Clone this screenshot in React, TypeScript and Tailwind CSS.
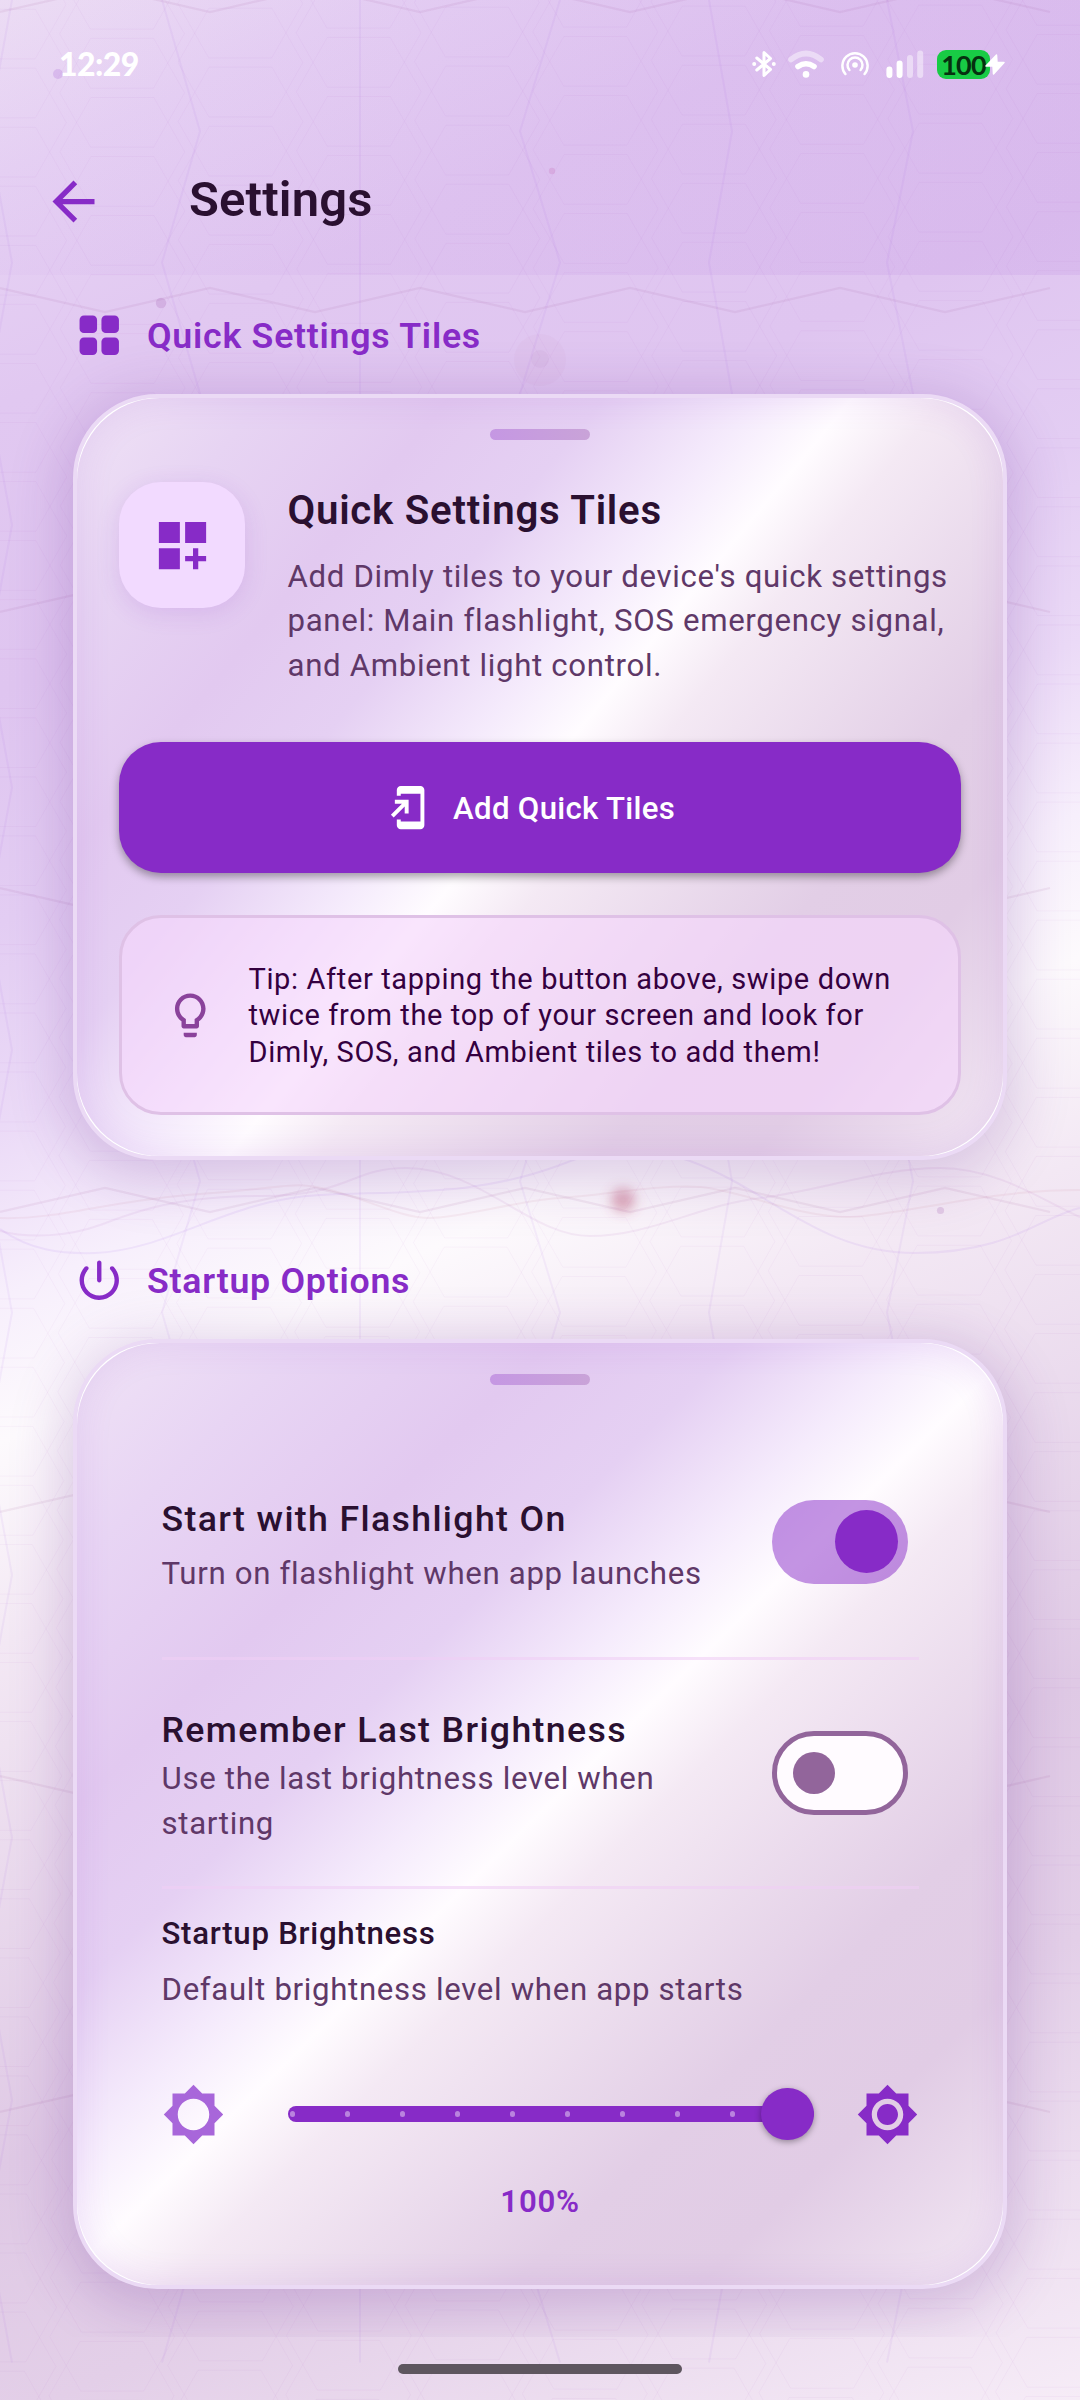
import React from 'react';

const PRIMARY = '#872BC7';

/* ---------- ambient background ---------- */

function hexPath(): string {
  const R = 62.4;
  const H = 54.4;
  const parts: string[] = [];
  for (let c = -2; c < 10; c++) {
    for (let j = -2; j < 42; j++) {
      const y = 92.8 + 59.05 * j + (c % 2 === 0 ? 0 : 29.3) - (c * 118.3) / 240;
      const shift = 1.7 - Math.pow((y - 500) / 1700, 2) * 9;
      const x = 121 + 118.3 * c + shift;
      parts.push(
        `M${x - R} ${y}L${x - 31.5} ${y - H}H${x + 31.5}L${x + R} ${y}L${x + 31.5} ${y + H}H${x - 31.5}Z`,
      );
    }
  }
  return parts.join('');
}

const COLUMNS: [number, number][] = [
  [12, -12],
  [162, 200],
  [360, 360],
  [560, 520],
  [709, 732],
  [887, 913],
];

const ROWS: [number, number][] = [
  [0, 1],
  [300, -1],
  [600, 1],
  [900, -1],
  [1200, 1],
  [1500, 1],
  [1788, -1],
  [2100, 1],
];

function columnPoints([a, b]: [number, number]): string {
  return Array.from({ length: 19 }, (_, i) => `${i % 2 === 0 ? a : b},${i * 131.25}`).join(' ');
}

function rowPoints([y, s]: [number, number]): string {
  return Array.from({ length: 11 }, (_, i) => `${i * 105},${y + (i % 2 === 0 ? 12 : -12) * s}`).join(' ');
}

function Backdrop() {
  return (
    <svg className="absolute inset-0 h-[2400px] w-[1080px]" viewBox="0 0 1080 2400" fill="none" aria-hidden="true">
      <defs>
        <filter id="soft" x="-100%" y="-100%" width="300%" height="300%">
          <feGaussianBlur stdDeviation="6" />
        </filter>
      </defs>
      <path d={hexPath()} stroke="#9b4fc0" strokeOpacity="0.045" strokeWidth="1" />
      {COLUMNS.map((c) => (
        <polyline key={c[0]} points={columnPoints(c)} stroke="#a050e0" strokeOpacity="0.07" strokeWidth="2" />
      ))}
      {ROWS.map((r) => (
        <polyline key={r[0]} points={rowPoints(r)} stroke="#a0508c" strokeOpacity="0.09" strokeWidth="2.2" />
      ))}
      <g strokeWidth="2" strokeOpacity="0.08">
        <path d="M0 1229C30 1250 60 1254 95 1253C170 1250 230 1199 320 1195S480 1195 560 1165S640 1145 690 1161C770 1190 820 1253 915 1253S1040 1217 1080 1208" stroke="#9040e0" />
        <path d="M0 1231C30 1239 70 1236 100 1225S170 1196 260 1196S350 1168 406 1168C480 1168 530 1236 590 1236S700 1205 760 1198S880 1168 940 1168S1050 1205 1080 1217" stroke="#a050b0" />
        <path d="M0 1218C60 1220 110 1200 200 1194S290 1180 330 1190S400 1218 430 1218S520 1200 560 1198S660 1184 700 1187S800 1218 850 1217S980 1190 1080 1190" stroke="#c06080" />
      </g>
      <circle cx="58" cy="74" r="5" fill="#9a50d0" fillOpacity="0.2" />
      <circle cx="161" cy="303" r="5.2" fill="#9a50a8" fillOpacity="0.2" />
      <circle cx="552" cy="171" r="3.2" fill="#c050a0" fillOpacity="0.18" />
      <circle cx="540" cy="360" r="26" fill="#b060a0" fillOpacity="0.04" />
      <circle cx="540" cy="359" r="9" fill="#a060a0" fillOpacity="0.06" />
      <circle cx="623" cy="1200" r="12" fill="#b84a68" fillOpacity="0.42" filter="url(#soft)" />
      <circle cx="940.5" cy="1210.5" r="3.6" fill="#9a50a8" fillOpacity="0.2" />
    </svg>
  );
}

/* ---------- icons ---------- */

function Icon({ d, className }: { d: string; className: string }) {
  return (
    <svg viewBox="0 0 24 24" className={className} fill="currentColor" aria-hidden="true">
      <path d={d} />
    </svg>
  );
}

const BACK = 'M20 11H7.83l5.59-5.59L12 4l-8 8 8 8 1.41-1.41L7.83 13H20v-2z';
const POWER =
  'M12 3c-.55 0-1 .45-1 1v8c0 .55.45 1 1 1s1-.45 1-1V4c0-.55-.45-1-1-1zm5.14 2.86c-.39.39-.38 1-.01 1.39 1.13 1.2 1.83 2.8 1.87 4.57.09 3.83-3.08 7.13-6.91 7.17C8.18 19.05 5 15.9 5 12c0-1.84.71-3.51 1.87-4.76.37-.39.37-1-.01-1.38-.4-.4-1.05-.39-1.43.02C3.98 7.42 3.07 9.47 3 11.74c-.14 4.88 3.83 9.1 8.71 9.25 5.1.16 9.29-3.93 9.29-9 0-2.37-.92-4.51-2.42-6.11-.38-.41-1.04-.42-1.44-.02z';
const DASHBOARD_ADD = 'M3 3h8v8H3zM13 3h8v8h-8zM3 13h8v8H3zM18 13h-2v3h-3v2h3v3h2v-3h3v-2h-3z';
const HOME_SCREEN =
  'M18 1.01L8 1c-1.1 0-2 .9-2 2v3h2V5h10v14H8v-1H6v3c0 1.1.9 2 2 2h10c1.1 0 2-.9 2-2V3c0-1.1-.9-1.99-2-1.99zM10 15h2V8H5v2h3.59L3 15.59 4.41 17 10 11.41V15z';
const BULB =
  'M9 21c0 .55.45 1 1 1h4c.55 0 1-.45 1-1v-1H9v1zm3-19C8.14 2 5 5.14 5 9c0 2.38 1.19 4.47 3 5.74V17c0 .55.45 1 1 1h6c.55 0 1-.45 1-1v-2.26c1.81-1.27 3-3.36 3-5.74 0-3.86-3.14-7-7-7zm2.85 11.1l-.85.6V16h-4v-2.3l-.85-.6C7.8 12.16 7 10.63 7 9c0-2.76 2.24-5 5-5s5 2.24 5 5c0 1.63-.8 3.16-2.15 4.1z';
const SUN =
  'M20 15.31L23.31 12 20 8.69V4h-4.69L12 .69 8.69 4H4v4.69L.69 12 4 15.31V20h4.69L12 23.31 15.31 20H20v-4.69zM12 18c-3.31 0-6-2.69-6-6s2.69-6 6-6 6 2.69 6 6-2.69 6-6 6z';
const SUN_FULL = SUN + 'M12 8c-2.21 0-4 1.79-4 4s1.79 4 4 4 4-1.79 4-4-1.79-4-4-4z';

function TilesIcon() {
  return (
    <svg viewBox="0 0 24 24" className="size-[52.5px]" fill="currentColor" aria-hidden="true">
      <rect x="3" y="3" width="8" height="8" rx="2" />
      <rect x="13" y="3" width="8" height="8" rx="2" />
      <rect x="3" y="13" width="8" height="8" rx="2" />
      <rect x="13" y="13" width="8" height="8" rx="2" />
    </svg>
  );
}

/* ---------- status bar ---------- */

function StatusBar() {
  return (
    <div className="flex h-[128px] items-center justify-between pr-[75px] pl-[59px] text-white">
      <span className="text-[32px] leading-[36px] font-black tracking-[-0.6px]" style={{ fontFamily: 'Lato, sans-serif' }}>
        12:29
      </span>
      <div className="flex items-center">
        <svg viewBox="0 0 24 28" className="h-[28px] w-[24px]" fill="none" stroke="currentColor" strokeWidth="3" strokeLinecap="round" strokeLinejoin="round">
          <path d="M4.8 8L18.500 19.500L12 25.500V2.500L18.500 8.500L4.800 20" />
          <circle cx="2.2" cy="14" r="2" fill="currentColor" stroke="none" />
          <circle cx="21.8" cy="14" r="2" fill="currentColor" stroke="none" />
        </svg>
        <svg viewBox="0 0 36 28" className="ml-[12px] h-[28px] w-[36px]" fill="none" stroke="currentColor" strokeWidth="5.6" strokeLinecap="round">
          <path d="M3 9.5Q18 -2.500 33 9.5" strokeOpacity="0.45" />
          <path d="M10 16.5Q18 11 26 16.5" />
          <circle cx="18" cy="24.4" r="3.3" fill="currentColor" stroke="none" />
        </svg>
        <svg viewBox="0 0 28 28" className="ml-[17px] h-[28px] w-[28px]" fill="none" stroke="currentColor" strokeWidth="2.5" strokeLinecap="round">
          <path d="M4.4 24A12.6 12.6 0 1 1 23.6 24" />
          <path d="M8.4 20A7.500 7.500 0 1 1 19.6 20" />
          <circle cx="14" cy="15" r="2.8" fill="currentColor" stroke="none" />
        </svg>
        <svg viewBox="0 0 38 28" className="ml-[17px] h-[28px] w-[38px]" fill="none" stroke="currentColor" strokeWidth="6" strokeLinecap="round">
          <path d="M3.4 19.5V25M13.6 13.500V25" />
          <path d="M24 8V25M34.200 3.500V25" strokeOpacity="0.45" />
        </svg>
        <div className="flex h-[29px] w-[53px] items-center justify-center rounded-[9px] bg-[#18CB45] ml-[13px]">
          <span className="text-[27px] leading-[29px] font-bold tracking-[-0.8px] text-[#06310F]" style={{ fontFamily: 'Lato, sans-serif' }}>
            100
          </span>
        </div>
        <svg viewBox="0 0 20 21" className="relative -ml-[5px] h-[21px] w-[20px]" fill="currentColor" stroke="currentColor" strokeWidth="1.5" strokeLinejoin="round">
          <path d="M11.5 1L1 12H8L8.5 20L19 8.5H12Z" />
        </svg>
      </div>
    </div>
  );
}

/* ---------- building blocks ---------- */

function SectionHeader({ icon, children }: { icon: React.ReactNode; children: React.ReactNode }) {
  return (
    <div className="flex h-[53px] items-center gap-[21.5px] pl-[73px] text-[#872BC7]">
      {icon}
      <h2 className="text-[35.7px] leading-[48px] font-semibold tracking-[0.75px]">{children}</h2>
    </div>
  );
}

function Card({ className, children }: { className: string; children: React.ReactNode }) {
  return (
    <section className="mx-[73px] rounded-[84px] border-4 border-[#EBDAF5] bg-white shadow-[0_12px_56px_10px_rgba(96,30,140,0.2)]">
      <div className={`flex flex-col rounded-[83px] px-[42px] pt-[31px] shadow-[inset_0_0_36px_rgba(134,43,199,0.11)] ${className}`}>
        <div className="mx-auto h-[11px] w-[100px] shrink-0 rounded-full bg-[linear-gradient(90deg,#C597E3,#C9A3D8)]" />
        {children}
      </div>
    </section>
  );
}

function Switch({ on }: { on: boolean }) {
  return on ? (
    <div className="flex h-[84px] w-[136.5px] shrink-0 items-center justify-end rounded-full bg-[#872BC7]/50 pr-[10.5px]">
      <div className="size-[63px] rounded-full bg-[#872BC7]" />
    </div>
  ) : (
    <div className="flex h-[84px] w-[136.5px] shrink-0 items-center rounded-full border-[5.25px] border-[#92659B] bg-[#FFFBFF] pl-[16px]">
      <div className="size-[42px] rounded-full bg-[#92659B]" />
    </div>
  );
}

const BODY = 'text-[31.2px] tracking-[0.67px] text-[#5F3868]';
const ROW_TITLE = 'text-[35.7px] leading-[48px] font-medium tracking-[1.35px] text-[#2A1030]';

function Slider() {
  return (
    <div className="relative ml-[21px] flex h-[63px] w-[526px] items-center">
      <div className="flex h-[16px] w-full items-center gap-[49.7px] rounded-full bg-[#872BC7] pl-[2.6px]">
        {Array.from({ length: 9 }, (_, i) => (
          <span key={i} className="size-[5.25px] shrink-0 rounded-full bg-[#B983DE]" />
        ))}
      </div>
      <div className="absolute right-0 size-[52.5px] rounded-full bg-[#872BC7] shadow-[0_2px_6px_rgba(0,0,0,0.35)]" />
    </div>
  );
}

export default function App() {
  return (
    <div
      className="relative h-[2400px] w-[1080px] overflow-hidden bg-[linear-gradient(155.8deg,#EEE0F5_0%,#E7D3F4_6%,#E1C8F1_14%,#DFC5F0_24%,#E3CDF3_32%,#EBDAF7_39%,#F7EFFC_45%,#FDFAFD_50%,#F3E8F4_57%,#DFC9E5_75%,#E3CFE8_84%,#F6ECF7_100%)]"
      style={{ fontFamily: 'Roboto, sans-serif', color: PRIMARY }}
    >
      <Backdrop />

      <div className="relative flex h-full flex-col">
        <header className="h-[275px] shrink-0 bg-[linear-gradient(100deg,rgba(134,43,199,0.02),rgba(134,43,199,0.08))]">
          <StatusBar />
          <div className="flex h-[147px] items-center pl-[42px]">
            <Icon d={BACK} className="size-[63px]" />
            <h1 className="ml-[84px] pb-[3px] text-[49px] leading-[60px] font-semibold tracking-[0.15px] text-[#2A1030]">Settings</h1>
          </div>
        </header>

        <main className="h-[2062px] shrink-0 overflow-hidden pt-[34px]">
          <SectionHeader icon={<TilesIcon />}>Quick Settings Tiles</SectionHeader>

          <div className="mt-[32px]">
            <Card className="h-[758px] bg-[linear-gradient(129.5deg,#F0E3F6_0%,#E7D4F3_12%,#E2C9F0_24%,#E5D0F3_34%,#F5EBFC_44%,#FFFCFF_50%,#F4E9F4_56%,#E2CEE6_74%,#E1CCE5_84%,#F3E8F4_100%)]">
              <div className="mt-[42px] flex">
                <div className="flex size-[126px] shrink-0 items-center justify-center rounded-[42px] bg-[#F2DAFF] shadow-[0_5px_24px_rgba(134,43,199,0.14)]">
                  <Icon d={DASHBOARD_ADD} className="size-[63px]" />
                </div>
                <div className="ml-[42.5px] pt-[1px]">
                  <h3 className="text-[40.2px] leading-[56px] font-semibold tracking-[0.76px] whitespace-nowrap text-[#2A1030]">
                    Quick Settings Tiles
                  </h3>
                  <p className={`mt-[16px] leading-[44.3px] whitespace-nowrap ${BODY}`}>
                    Add Dimly tiles to your device's quick settings
                    <br />
                    panel: Main flashlight, SOS emergency signal,
                    <br />
                    and Ambient light control.
                  </p>
                </div>
              </div>

              <button className="mt-[54px] flex h-[131.5px] items-center justify-center gap-[21px] rounded-[42px] bg-[#872BC7] pr-[20px] text-white shadow-[0_4px_8px_rgba(0,0,0,0.35)]">
                <Icon d={HOME_SCREEN} className="size-[47.25px]" />
                <span className="pt-[3px] text-[31.2px] leading-[44px] font-medium tracking-[0.3px]">Add Quick Tiles</span>
              </button>

              <div className="mt-[42px] flex h-[200px] items-center rounded-[42px] border-[3px] border-[#DFC1E6] bg-[rgba(246,214,252,0.62)] pl-[41.5px]">
                <Icon d={BULB} className="size-[52.5px] shrink-0 text-[#8A429B]" />
                <p className="ml-[32.5px] pt-[1px] text-[29px] leading-[36.8px] tracking-[0.63px] whitespace-nowrap text-[#34003F]">
                  Tip: After tapping the button above, swipe down
                  <br />
                  twice from the top of your screen and look for
                  <br />
                  Dimly, SOS, and Ambient tiles to add them!
                </p>
              </div>
            </Card>
          </div>

          <div className="mt-[94px]">
            <SectionHeader icon={<Icon d={POWER} className="size-[52.5px]" />}>Startup Options</SectionHeader>
          </div>

          <div className="mt-[32px]">
            <Card className="h-[942px] bg-[linear-gradient(135.6deg,#F0E3F6_0%,#E8D5F4_12%,#E2C9F0_25%,#E5D0F3_35%,#F5EBFC_44%,#FFFCFF_50%,#F4E9F4_56%,#E2CEE6_74%,#E1CCE5_84%,#F3E8F4_100%)]">
              <div className="mx-[42.5px] flex flex-col">
                <div className="mt-[55px] flex h-[220px] items-center justify-between border-b-[3px] border-[#F0CEF5]/60 pr-[10.5px] pb-[14px]">
                  <div className="pt-[8px]">
                    <h3 className={ROW_TITLE}>Start with Flashlight On</h3>
                    <p className={`mt-[8px] leading-[45px] ${BODY}`}>Turn on flashlight when app launches</p>
                  </div>
                  <Switch on />
                </div>
                <div className="flex h-[228.5px] items-center justify-between border-b-[3px] border-[#F0CEF5]/60 pr-[10.5px]">
                  <div className="pt-[6px]">
                    <h3 className={ROW_TITLE}>Remember Last Brightness</h3>
                    <p className={`mt-[2px] leading-[45px] ${BODY}`}>
                      Use the last brightness level when
                      <br />
                      starting
                    </p>
                  </div>
                  <Switch on={false} />
                </div>
                <h4 className="mt-[23px] text-[31.2px] leading-[44px] font-medium tracking-[0.72px] text-[#2A1030]">
                  Startup Brightness
                </h4>
                <p className={`mt-[11px] leading-[45px] ${BODY}`}>Default brightness level when app starts</p>
                <div className="mt-[71px] flex items-center justify-between">
                  <Icon d={SUN} className="size-[63px] text-[#A866DA]" />
                  <Slider />
                  <Icon d={SUN_FULL} className="size-[63px]" />
                </div>
                <p className="mt-[34px] text-center text-[31.2px] leading-[44px] font-semibold tracking-[0.7px]">100%</p>
              </div>
            </Card>
          </div>
        </main>

        <footer className="flex flex-1 justify-center pt-[27px]">
          <div className="h-[10px] w-[284px] rounded-full bg-[#5E565F]" />
        </footer>
      </div>
    </div>
  );
}
